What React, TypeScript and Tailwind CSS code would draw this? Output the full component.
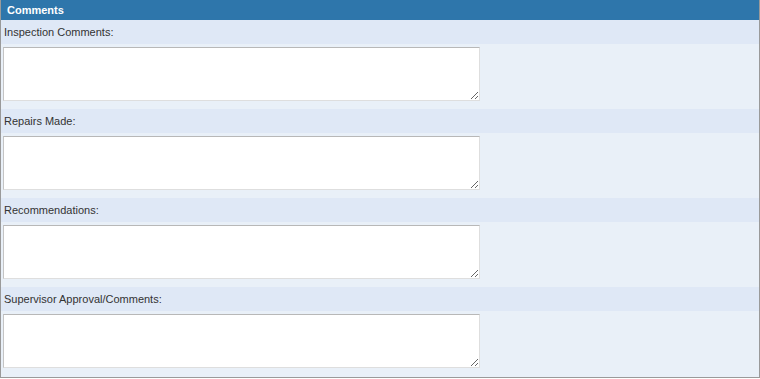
const fields = [
  "Inspection Comments:",
  "Repairs Made:",
  "Recommendations:",
  "Supervisor Approval/Comments:",
];

export default function App() {
  return (
    <div className="h-[379px] w-[760px] bg-white font-['Liberation_Sans',Arial,sans-serif]">
      <div className="h-[378px] border-x border-b border-[#9a9a9a] bg-[#e9f0f8]">
        <div className="flex h-5 items-center bg-[#2e76ab] px-[6px] text-[11px] font-bold text-white">
          Comments
        </div>
        {fields.map((label) => (
          <div key={label}>
            <div className="flex h-6 items-center bg-[#dfe8f6] px-[3px] text-[11px] text-[#333]">
              {label}
            </div>
            <div className="h-[65px] px-[2px] pt-[3px]">
              <textarea className="block h-[54px] w-[477px] resize border border-t-[#b8b8b8] border-l-[#c4c4c4] border-r-[#dedede] border-b-[#dedede] bg-white outline-none" />
            </div>
          </div>
        ))}
      </div>
    </div>
  );
}
